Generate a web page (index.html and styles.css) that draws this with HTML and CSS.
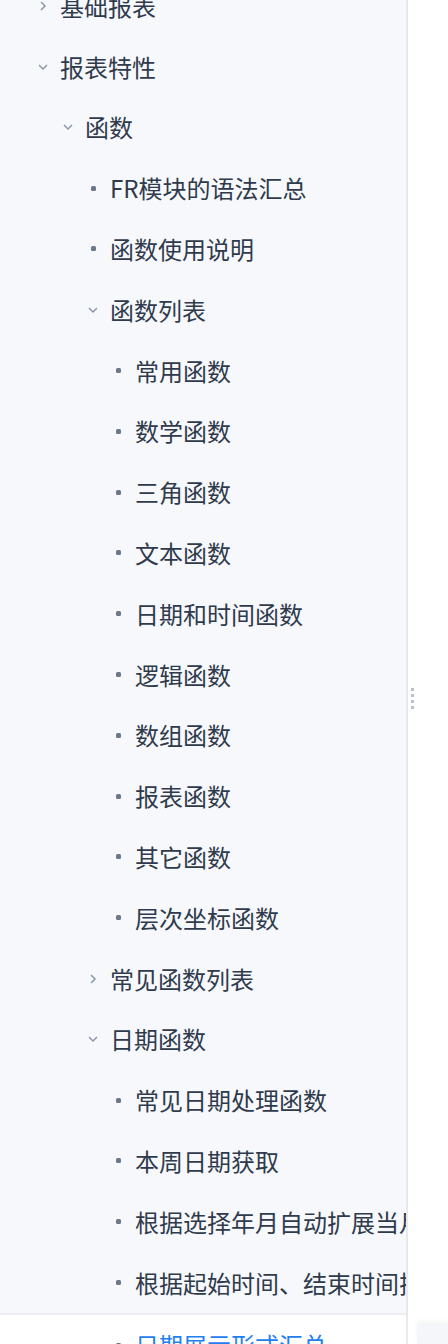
FILE: index.html
```html
<!DOCTYPE html>
<html lang="zh-CN">
<head>
    <meta charset="UTF-8">
    <title>函数 | 报表特性</title>
    <link rel="stylesheet" href="styles.css">
</head>
<body>
    <div class="layout">
        <nav class="sidebar">
            <div class="tree">
                <div class="node lv1"><span class="mark"><svg class="chev" viewBox="0 0 12 12"><path d="M4 2 L8 6 L4 10"/></svg></span><span class="label">基础报表</span></div>
                <div class="node lv1"><span class="mark"><svg class="chev" viewBox="0 0 12 12"><path d="M2 4 L6 8 L10 4"/></svg></span><span class="label">报表特性</span></div>
                <div class="node lv2"><span class="mark"><svg class="chev" viewBox="0 0 12 12"><path d="M2 4 L6 8 L10 4"/></svg></span><span class="label">函数</span></div>
                <div class="node lv3"><span class="mark"><i class="dot"></i></span><span class="label">FR模块的语法汇总</span></div>
                <div class="node lv3"><span class="mark"><i class="dot"></i></span><span class="label">函数使用说明</span></div>
                <div class="node lv3"><span class="mark"><svg class="chev" viewBox="0 0 12 12"><path d="M2 4 L6 8 L10 4"/></svg></span><span class="label">函数列表</span></div>
                <div class="node lv4"><span class="mark"><i class="dot"></i></span><span class="label">常用函数</span></div>
                <div class="node lv4"><span class="mark"><i class="dot"></i></span><span class="label">数学函数</span></div>
                <div class="node lv4"><span class="mark"><i class="dot"></i></span><span class="label">三角函数</span></div>
                <div class="node lv4"><span class="mark"><i class="dot"></i></span><span class="label">文本函数</span></div>
                <div class="node lv4"><span class="mark"><i class="dot"></i></span><span class="label">日期和时间函数</span></div>
                <div class="node lv4"><span class="mark"><i class="dot"></i></span><span class="label">逻辑函数</span></div>
                <div class="node lv4"><span class="mark"><i class="dot"></i></span><span class="label">数组函数</span></div>
                <div class="node lv4"><span class="mark"><i class="dot"></i></span><span class="label">报表函数</span></div>
                <div class="node lv4"><span class="mark"><i class="dot"></i></span><span class="label">其它函数</span></div>
                <div class="node lv4"><span class="mark"><i class="dot"></i></span><span class="label">层次坐标函数</span></div>
                <div class="node lv3"><span class="mark"><svg class="chev" viewBox="0 0 12 12"><path d="M4 2 L8 6 L4 10"/></svg></span><span class="label">常见函数列表</span></div>
                <div class="node lv3"><span class="mark"><svg class="chev" viewBox="0 0 12 12"><path d="M2 4 L6 8 L10 4"/></svg></span><span class="label">日期函数</span></div>
                <div class="node lv4"><span class="mark"><i class="dot"></i></span><span class="label">常见日期处理函数</span></div>
                <div class="node lv4"><span class="mark"><i class="dot"></i></span><span class="label">本周日期获取</span></div>
                <div class="node lv4"><span class="mark"><i class="dot"></i></span><span class="label">根据选择年月自动扩展当月所有日期</span></div>
                <div class="node lv4"><span class="mark"><i class="dot"></i></span><span class="label">根据起始时间、结束时间扩展日期</span></div>
                <div class="node lv4 active"><span class="mark"><i class="dot"></i></span><span class="label">日期展示形式汇总</span></div>
            </div>
        </nav>
        <div class="resizer">
            <i></i><i></i><i></i><i></i>
        </div>
        <main class="content">
            <div class="content-body"></div>
            <div class="content-foot"></div>
        </main>
    </div>
</body>
</html>
```

FILE: styles.css
```css
html, body {
    margin: 0;
    padding: 0;
    height: 100%;
    overflow: hidden;
}

body {
    font-family: "Noto Sans CJK SC", "Noto Sans", sans-serif;
    color: #2f3b4c;
    background: #fff;
}

.layout {
    display: flex;
    height: 1344px;
}

.sidebar {
    width: 406px;
    flex-shrink: 0;
    background: #f7f8fc;
    border-right: 2px solid #e8e9ec;
    overflow: hidden;
}

.tree {
    margin-top: -24.6px;
}

.node {
    display: flex;
    align-items: center;
    height: 60.8px;
    gap: 11px;
    font-size: 24px;
    white-space: nowrap;
}

.lv1 { padding-left: 37px; }
.lv2 { padding-left: 62px; }
.lv3 { padding-left: 87px; }
.lv4 { padding-left: 112px; }

.mark {
    width: 12px;
    height: 12px;
    flex-shrink: 0;
    display: flex;
    align-items: center;
    justify-content: center;
}

.chev {
    width: 12px;
    height: 12px;
    fill: none;
    stroke: #8c96a6;
    stroke-width: 1.5;
}

.dot {
    display: block;
    width: 5px;
    height: 5px;
    border-radius: 1.5px;
    background: #6b778a;
}

.label {
    line-height: 1;
}

.node.active {
    background: #fff;
    border-top: 2px solid #ebedf0;
    color: #1f80f0;
}

.resizer {
    width: 9px;
    flex-shrink: 0;
    display: flex;
    flex-direction: column;
    justify-content: center;
    align-items: center;
    gap: 3px;
    background: #fff;
    padding-top: 53px;
}

.resizer i {
    display: block;
    width: 3px;
    height: 3px;
    background: #b9c3d0;
}

.content {
    flex: 1;
    display: flex;
    flex-direction: column;
    background: #fff;
}

.content-body {
    height: 1323px;
}

.content-foot {
    flex: 1;
    background: #f5f6fa;
    box-shadow: 0 -2px 4px rgba(0, 0, 0, 0.04);
}
```
